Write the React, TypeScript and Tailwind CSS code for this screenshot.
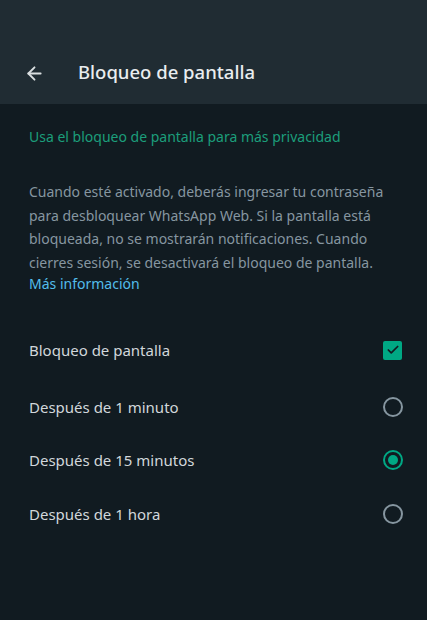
import { ArrowLeft, Check } from "lucide-react";

const options = [
  { label: "Después de 1 minuto", selected: false },
  { label: "Después de 15 minutos", selected: true },
  { label: "Después de 1 hora", selected: false },
];

export default function App() {
  return (
    <div
      className="w-[427px] h-[620px] bg-[#111b21] flex flex-col overflow-hidden"
      style={{ fontFamily: '"Noto Sans", "Open Sans", sans-serif' }}
    >
      {/* Header */}
      <div className="h-[104px] bg-[#202c33] flex items-end px-[24px] pb-[20px] shrink-0">
        <ArrowLeft className="w-[21px] h-[21px] text-[#d9dee0]" strokeWidth={2.2} />
        <h1 className="ml-[33px] text-[18.5px] font-medium text-[#e9edef] leading-[24px]">
          Bloqueo de pantalla
        </h1>
      </div>

      <div className="px-[29px]">
        <p className="mt-[23px] text-[14px] text-[#1c9e7b] leading-[20px]">
          Usa el bloqueo de pantalla para más privacidad
        </p>

        <p className="mt-[33px] text-[14px] text-[#8696a0] leading-[23.5px]">
          Cuando esté activado, deberás ingresar tu contraseña para desbloquear WhatsApp Web. Si la pantalla
          está bloqueada, no se mostrarán notificaciones. Cuando cierres sesión, se desactivará el bloqueo de
          pantalla.{" "}
          <a className="block text-[#53bdeb] leading-[18px] mt-[1px]">Más información</a>
        </p>

        <div className="mt-[45px] flex items-center justify-between h-[24px]">
          <span className="text-[15px] text-[#d1d7db]">Bloqueo de pantalla</span>
          <span className="w-[19px] h-[19px] mr-[-4px] rounded-[2px] bg-[#00a884] flex items-center justify-center">
            <Check className="w-[14px] h-[14px] text-[#111b21]" strokeWidth={3} />
          </span>
        </div>

        <div className="mt-[18px] flex flex-col">
          {options.map((o) => (
            <div key={o.label} className="flex items-center justify-between h-[53.5px]">
              <span className="text-[15px] text-[#d1d7db]">{o.label}</span>
              {o.selected ? (
                <span className="w-[20px] h-[20px] mr-[-5px] rounded-full border-2 border-[#00a884] flex items-center justify-center">
                  <span className="w-[10px] h-[10px] rounded-full bg-[#00a884]" />
                </span>
              ) : (
                <span className="w-[20px] h-[20px] mr-[-5px] rounded-full border-2 border-[#8696a0]" />
              )}
            </div>
          ))}
        </div>
      </div>
    </div>
  );
}
